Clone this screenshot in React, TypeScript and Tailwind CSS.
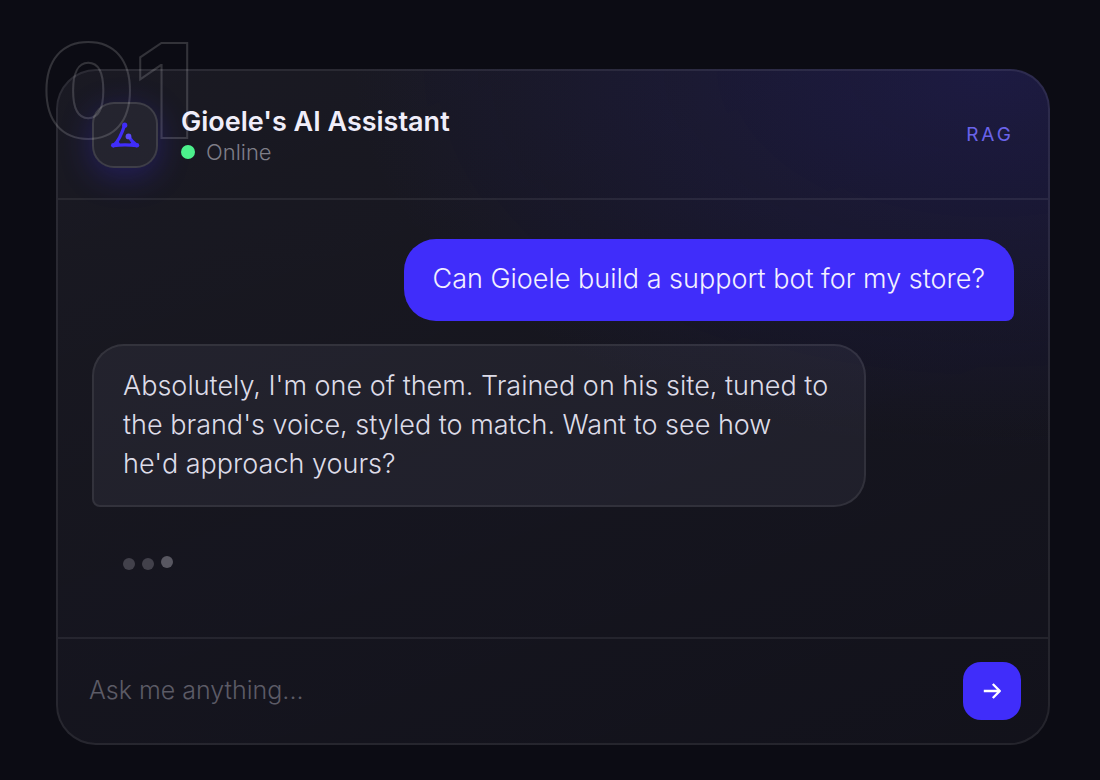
import React, { useState } from "react";

type Message = {
  from: "user" | "bot";
  text: string;
};

const messages: Message[] = [
  { from: "user", text: "Can Gioele build a support bot for my store?" },
  {
    from: "bot",
    text: "Absolutely, I'm one of them. Trained on his site, tuned to the brand's voice, styled to match. Want to see how\nhe'd approach yours?",
  },
];

function Logo() {
  return (
    <svg viewBox="0 0 30 26" className="w-[30px] h-[26px]" aria-hidden="true">
      <g fill="none" stroke="#402dfa" strokeWidth="3.2" strokeLinecap="round" strokeLinejoin="round">
        <path d="M14.6 3.2 Q12.4 10 9.6 15.4 Q7 20.4 3.4 23.6" />
        <path d="M3.4 23.6 Q9 22.8 15 22.8 Q21 22.8 26.8 23.6" />
        <path d="M18.8 14.6 Q22 20 26.8 23.4" />
      </g>
      <g fill="#402dfa">
        <circle cx="14.7" cy="3.2" r="2.6" />
        <circle cx="3.3" cy="23.2" r="2.3" />
        <circle cx="26.9" cy="23.2" r="2.3" />
        <path d="M7.4 17.6 L10.2 21.9 H4Z" />
        <path d="M22.6 18.6 L20 21.9 H26.4Z" />
      </g>
      <circle cx="18.5" cy="14.4" r="2.9" fill="#5a4bf8" />
    </svg>
  );
}

function Header() {
  return (
    <header className="flex items-center gap-[23px] border-b-2 border-white/7 px-[34px] pt-[31px] pb-[30px]">
      <div className="flex h-[66px] w-[66px] shrink-0 items-center justify-center rounded-[22px] border-2 border-white/12 bg-[rgba(225,220,255,0.06)] shadow-[0_8px_32px_rgba(64,45,250,0.28)]">
        <Logo />
      </div>
      <div className="min-w-0 flex-1">
        <h1 className="text-[27px] leading-[34px] font-semibold text-[#f0eefa]">Gioele's AI Assistant</h1>
        <p className="flex items-center gap-[11px] text-[22px] leading-[26px] font-light text-[#7f7e88]">
          <span className="h-3.5 w-3.5 rounded-full bg-[#4cf08c]" />
          Online
        </p>
      </div>
      <span className="text-[19px] tracking-[3px] text-[#6a63ea]">RAG</span>
    </header>
  );
}

function Bubble({ from, text }: Message) {
  if (from === "user") {
    return (
      <p className="max-w-[84%] self-end rounded-[32px] rounded-br-lg bg-[#402dfa] px-[29px] pt-5 pb-[23px] text-[27px] leading-[39px] font-light text-[#f3f0ff]">
        {text}
      </p>
    );
  }
  return (
    <p className="w-[84%] self-start rounded-[32px] rounded-bl-lg border-2 border-white/8 bg-[rgba(225,220,255,0.06)] px-[29px] pt-5 pb-[22px] text-[27px] leading-[39px] font-light whitespace-pre-line text-[#dddce8]">
      {text}
    </p>
  );
}

function Typing() {
  return (
    <div className="flex gap-[7px] px-[31px] pt-7" role="status" aria-label="typing">
      <span className="h-3 w-3 rounded-full bg-[#42414b]" />
      <span className="h-3 w-3 rounded-full bg-[#42414b]" />
      <span className="h-3 w-3 -translate-y-0.5 rounded-full bg-[#585761]" />
    </div>
  );
}

export default function App() {
  const [draft, setDraft] = useState("");

  return (
    <main className="relative isolate flex min-h-screen flex-col bg-[#0c0c14] pt-[69px] pr-[50px] pb-[35px] pl-14 font-['Inter','Liberation_Sans',sans-serif]">
      {/* Outlined step number, sits behind the glass card */}
      <span
        aria-hidden="true"
        className="pointer-events-none absolute top-[26px] left-[42px] -z-10 text-[130px] leading-[130px] font-black text-transparent select-none [-webkit-text-stroke:2px_rgba(255,255,255,0.16)]"
      >
        01
      </span>

      <section className="flex flex-1 flex-col overflow-hidden rounded-[40px] border-2 border-white/8 bg-[radial-gradient(ellipse_640px_380px_at_94%_0%,rgba(50,40,200,0.2),transparent),linear-gradient(160deg,rgba(225,220,255,0.065),rgba(225,220,255,0.03))] bg-origin-border">
        <Header />

        <div className="flex flex-1 flex-col gap-[23px] px-[34px] pt-[39px] pb-8">
          {messages.map((m) => (
            <Bubble key={m.text} {...m} />
          ))}
          <Typing />
        </div>

        <form
          className="flex items-center gap-4 border-t-2 border-white/7 py-[23px] pr-[27px] pl-[31px]"
          onSubmit={(e) => {
            e.preventDefault();
            setDraft("");
          }}
        >
          <input
            type="text"
            aria-label="Ask me anything"
            placeholder="Ask me anything..."
            value={draft}
            onChange={(e) => setDraft(e.target.value)}
            className="min-w-0 flex-1 bg-transparent text-[25px] font-light text-[#dddce8] outline-none placeholder:text-[#5c5b66]"
          />
          <button
            type="submit"
            aria-label="Send"
            className="flex h-[58px] w-[58px] shrink-0 items-center justify-center rounded-[18px] bg-[#402dfa] text-white"
          >
            <svg
              viewBox="0 0 20 18"
              className="h-[18px] w-5"
              fill="none"
              stroke="currentColor"
              strokeWidth="2.4"
              strokeLinecap="butt"
              strokeLinejoin="round"
            >
              <path d="M1.8 9H17.8M10.8 2L17.8 9L10.8 16" />
            </svg>
          </button>
        </form>
      </section>
    </main>
  );
}
